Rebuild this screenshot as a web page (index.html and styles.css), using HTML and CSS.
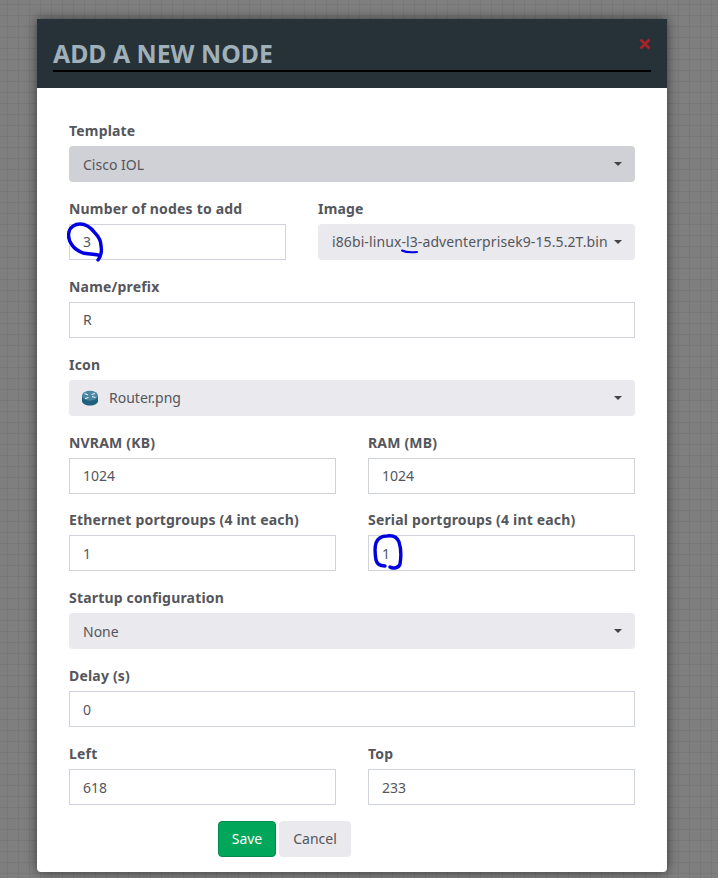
FILE: index.html
```html
<!DOCTYPE html>
<html lang="en">
<head>
<meta charset="utf-8">
<title>Add a new node</title>
<link rel="stylesheet" href="styles.css">
</head>
<body>
<div class="modal">
  <header class="modal-head">
    <h1 class="modal-title">ADD A NEW NODE</h1>
    <svg class="close" width="12" height="12" viewBox="0 0 12 12"><path d="M1.500 1.500l9 9M10.500 1.500l-9 9" stroke="#a8222a" stroke-width="2.800" fill="none"/></svg>
  </header>
  <form class="modal-body">
    <div class="field"><label>Template</label><div class="select dark"><span>Cisco IOL</span><i class="caret"></i></div></div>
    <div class="row split-image">
      <div class="field note-wrap"><label>Number of nodes to add</label><div class="input">3</div>
        <svg class="ink ink-three" width="38" height="41" viewBox="0 0 38 41"><path d="M31 34C26 33 20 33 16 32C11 30 7 27 5 24C2 20 1 15 2 11C3 6 8 3 13 3C20 3 25 8 28 12C32 16 34 20 34 25C35 30 34 35 31 39" fill="none" stroke="#0000e0" stroke-width="3.400" stroke-linecap="round" stroke-linejoin="round"/></svg>
      </div>
      <div class="field note-wrap"><label>Image</label><div class="select"><span class="clip">i86bi-linux-l3-adventerprisek9-15.5.2T.bin</span><i class="caret"></i></div>
        <svg class="ink ink-l3" width="18" height="5" viewBox="0 0 18 5"><path d="M1 1.500c4 2 10 2 15 1.500" fill="none" stroke="#0000e0" stroke-width="2" stroke-linecap="round"/></svg>
      </div>
    </div>
    <div class="field"><label>Name/prefix</label><div class="input">R</div></div>
    <div class="field"><label>Icon</label><div class="select"><span class="with-icon">
      <svg width="16" height="16" viewBox="0 0 16 16"><path d="M0 6v5c0 2.500 3.500 4.500 8 4.500s8-2 8-4.500V6Z" fill="#1f5f7c"/><ellipse cx="8" cy="5.800" rx="8" ry="5" fill="#4a87a3"/><path d="M2.500 3.500l3.500 1.500M6.500 7.500L3 8.500M13.500 7.500L10 6.500M9.500 4.500l3.500-1" stroke="#e8eef1" stroke-width="1.300"/></svg>
      Router.png</span><i class="caret"></i></div></div>
    <div class="row">
      <div class="field"><label>NVRAM (KB)</label><div class="input">1024</div></div>
      <div class="field"><label>RAM (MB)</label><div class="input">1024</div></div>
    </div>
    <div class="row">
      <div class="field"><label>Ethernet portgroups (4 int each)</label><div class="input">1</div></div>
      <div class="field note-wrap"><label>Serial portgroups (4 int each)</label><div class="input">1</div>
        <svg class="ink ink-one" width="30" height="36" viewBox="0 0 30 36"><path d="M12 32C7 32 4 30 3 26C2 20 2 12 3 9C5 4 8 2 14 2C20 1 24 3 26 8C28 14 28 24 27 30C26 34 20 35 17 33" fill="none" stroke="#0000e0" stroke-width="3.400" stroke-linecap="round"/></svg>
      </div>
    </div>
    <div class="field"><label>Startup configuration</label><div class="select"><span>None</span><i class="caret"></i></div></div>
    <div class="field"><label>Delay (s)</label><div class="input">0</div></div>
    <div class="row">
      <div class="field"><label>Left</label><div class="input">618</div></div>
      <div class="field"><label>Top</label><div class="input">233</div></div>
    </div>
    <div class="actions">
      <button type="button" class="btn save">Save</button>
      <button type="button" class="btn cancel">Cancel</button>
    </div>
  </form>
</div>
</body>
</html>
```

FILE: styles.css
```css
* { box-sizing: border-box; }
html, body { margin: 0; height: 100%; }
body {
  width: 718px;
  height: 878px;
  overflow: hidden;
  padding: 19px 0 0 37px;
  font-family: "Noto Sans", "Open Sans", sans-serif;
  font-size: 14px;
  color: #54565c;
  background-color: #7f7f7f;
  background-image:
    linear-gradient(#787878 1px, transparent 1px),
    linear-gradient(90deg, #787878 1px, transparent 1px);
  background-size: 11px 11px;
  background-position: 7px 4px;
}
.modal {
  width: 630px;
  height: 853px;
  background: #fff;
  box-shadow: 0 0 12px rgba(0, 0, 0, .55);
  border-radius: 0 0 4px 4px;
  overflow: hidden;
}
.modal-head {
  position: relative;
  height: 69px;
  padding: 18px 16px 0;
  background: #263238;
}
.modal-title {
  margin: 0;
  height: 35px;
  border-bottom: 2px solid #000;
  font-size: 24.800px;
  line-height: 32px;
  font-weight: 700;
  color: #a0b0b8;
}
.close { position: absolute; top: 19px; right: 16px; }
.modal-body {
  display: flex;
  flex-direction: column;
  gap: 17.875px;
  padding: 34px 32px 0;
}
.field { position: relative; display: flex; flex-direction: column; flex: 1 1 0; min-width: 0; }
.field label {
  height: 24px;
  line-height: 18px;
  font-weight: 700;
  font-size: 14px;
  letter-spacing: .18px;
  color: #54565c;
}
.row { display: flex; gap: 32px; }
.split-image .field:first-child { flex: 0 0 217px; }
.input, .select {
  height: 36px;
  padding: 0 13px;
  display: flex;
  align-items: center;
  font-size: 14px;
}
.input { border: 1px solid #d0d3de; background: #fff; }
.select { justify-content: space-between; background: #e9e9ee; border-radius: 4px; gap: 4px; padding-left: 14px; }
.select.dark { background: #d0d1d6; }
.clip { white-space: nowrap; overflow: hidden; letter-spacing: .1px; }
.with-icon { display: flex; align-items: center; gap: 11px; margin-left: -1px; }
.caret {
  flex: none;
  width: 0;
  height: 0;
  border-left: 4.500px solid transparent;
  border-right: 4.500px solid transparent;
  border-top: 4.500px solid #444;
}
.ink { position: absolute; }
.ink-three { left: -2px; top: 21px; }
.ink-l3 { left: 83px; top: 49px; }
.ink-one { left: 5px; top: 23px; }
.actions { display: flex; gap: 3px; margin-top: -2px; padding-left: 149px; }
.btn {
  height: 36px;
  border-radius: 4px;
  font: 14px "Noto Sans", "Open Sans", sans-serif;
  padding: 0;
}
.save { background: #00a65a; border: 1px solid #008d4c; color: #fff; width: 58px; }
.cancel { background: #e9e9ee; border: 1px solid #e9e9ee; color: #54565c; width: 72px; }
```
